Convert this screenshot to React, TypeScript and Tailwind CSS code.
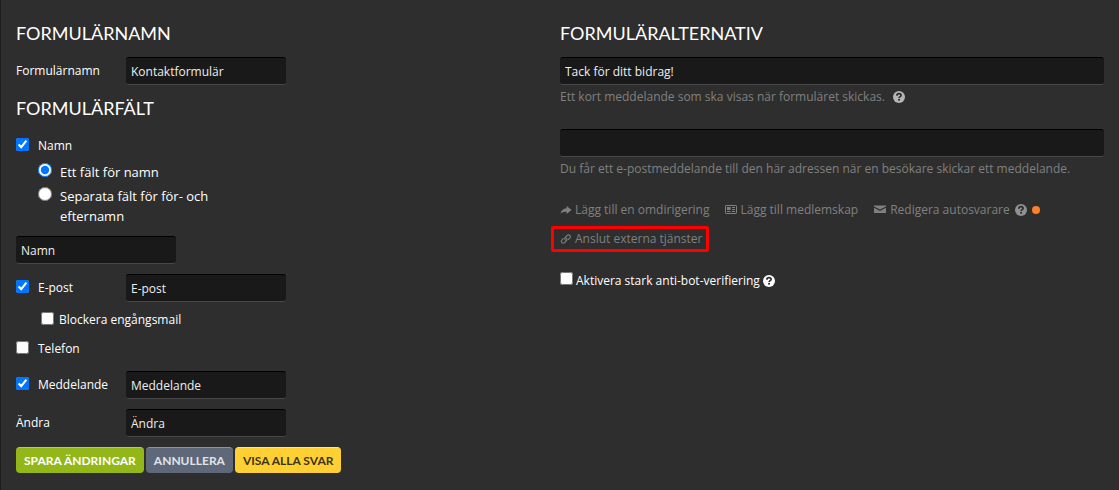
import React, { useState } from "react";

const inputClass =
  "block h-7 rounded-[3px] border-y border-t-black border-b-[#484848] bg-[#191919] px-[5px] pt-px text-[12px] text-[#eeeeee] outline-none";
const headingClass =
  "h-[22px] font-['Lato',sans-serif] text-[18px] leading-[22px] font-normal text-white uppercase";
const checkClass = "m-0 size-[13px] shrink-0 accent-[#0075ff]";
const radioClass = "m-0 mt-px size-[14px] shrink-0 accent-[#0075ff]";
const buttonClass =
  "h-[26px] rounded-[4px] border-t px-2 font-['Lato',sans-serif] text-[12px] leading-[25px] font-bold uppercase";

const HelpIcon = ({ className }: { className: string }) => (
  <svg viewBox="0 0 12 12" className={`size-3 shrink-0 ${className}`}>
    <circle cx="6" cy="6" r="6" fill="currentColor" />
    <path
      d="M3.9 4.7C3.9 3.4 4.8 2.7 6 2.7s2.1.7 2.1 1.7c0 1.3-2 1.2-2 2.7"
      fill="none"
      stroke="#2e2e2e"
      strokeWidth="1.7"
    />
    <rect x="5.1" y="7.9" width="1.9" height="1.7" fill="#2e2e2e" />
  </svg>
);

const ShareIcon = () => (
  <svg viewBox="0 0 12 12" className="size-3 shrink-0" fill="currentColor">
    <path d="M6.6 2 11.6 6l-5 4V7.7C4.1 7.6 2.1 8 .6 9.8 1 6.6 3.2 4.5 6.6 4.3z" />
  </svg>
);

const CardIcon = () => (
  <svg viewBox="0 0 12 12" className="size-3 shrink-0">
    <rect x=".5" y="1.5" width="11" height="8" rx=".6" fill="none" stroke="currentColor" />
    <path
      d="M2 3h3.6v3H2zM2 7h3.6v1H2zM7 3h3v1H7zM7 5h3v1H7zM7 7h3v1H7z"
      fill="currentColor"
    />
  </svg>
);

const MailIcon = () => (
  <svg viewBox="0 0 12 12" className="size-3 shrink-0" fill="currentColor">
    <path d="M0 1.5h12v1L6 5.6 0 2.5zM0 3.8l6 3.1 6-3.1V9H0z" />
  </svg>
);

const LinkIcon = () => (
  <svg
    viewBox="0 0 12 12"
    className="size-3 shrink-0"
    fill="none"
    stroke="currentColor"
    strokeWidth="1.1"
    strokeLinecap="round"
  >
    <path d="M5.2 6.9C4.4 6 4.6 5.1 5.2 4.5L7 2.6c.8-.8 2-.9 2.8-.2.8.8.7 2-.1 2.8L8.5 6.4" />
    <path d="M6.4 5.1c.8.8.7 1.8.1 2.4L4.7 9.4c-.8.8-2 .9-2.8.2-.8-.8-.7-2 .1-2.8l1.1-1.2" />
  </svg>
);

const App = () => {
  const [nameMode, setNameMode] = useState("single");

  return (
    <div className="min-h-screen border-l border-[#1c1c1c] bg-[#2e2e2e] px-[15px] font-['Open_Sans','Noto_Sans',sans-serif] text-[12px] leading-5 text-white">
      <form className="grid grid-cols-2" onSubmit={(e) => e.preventDefault()}>
        <section className="pt-[22px]">
          <h2 className={headingClass}>Formulärnamn</h2>
          <div className="mt-[13px] flex">
            <label htmlFor="formName" className="w-[110px] pt-1">
              Formulärnamn
            </label>
            <input id="formName" className={`${inputClass} w-40`} defaultValue="Kontaktformulär" />
          </div>

          <h2 className={`mt-3 ${headingClass}`}>Formulärfält</h2>
          <label className="mt-[17px] flex h-5 items-start gap-[9px]">
            <input type="checkbox" className={`mt-0.5 ${checkClass}`} defaultChecked />
            Namn
          </label>

          <div className="mt-[6px] ml-[22px] flex w-[190px] flex-col gap-1 text-[13px]">
            <label className="flex items-start gap-2">
              <input
                type="radio"
                name="nameMode"
                className={radioClass}
                checked={nameMode === "single"}
                onChange={() => setNameMode("single")}
              />
              Ett fält för namn
            </label>
            <label className="flex items-start gap-2">
              <input
                type="radio"
                name="nameMode"
                className={radioClass}
                checked={nameMode === "split"}
                onChange={() => setNameMode("split")}
              />
              Separata fält för för- och efternamn
            </label>
          </div>

          <input aria-label="Namn" className={`${inputClass} mt-[10px] w-40`} defaultValue="Namn" />

          <div className="mt-[10px] flex">
            <label className="flex w-[110px] items-start gap-[9px] pt-1">
              <input type="checkbox" className={`mt-0.5 ${checkClass}`} defaultChecked />
              E-post
            </label>
            <input aria-label="E-post" className={`${inputClass} w-40`} defaultValue="E-post" />
          </div>
          <label className="mt-2 ml-[25px] flex items-start gap-[5px]">
            <input type="checkbox" className={`mt-0.5 ${checkClass}`} />
            Blockera engångsmail
          </label>
          <label className="mt-[9px] flex items-start gap-[9px]">
            <input type="checkbox" className={`mt-0.5 ${checkClass}`} />
            Telefon
          </label>

          <div className="mt-3 flex">
            <label className="flex w-[110px] items-start gap-[9px] pt-1">
              <input type="checkbox" className={`mt-0.5 ${checkClass}`} defaultChecked />
              Meddelande
            </label>
            <input aria-label="Meddelande" className={`${inputClass} w-40`} defaultValue="Meddelande" />
          </div>
          <div className="mt-[10px] flex">
            <label htmlFor="submitText" className="w-[110px] pt-1">
              Ändra
            </label>
            <input id="submitText" className={`${inputClass} w-40`} defaultValue="Ändra" />
          </div>

          <div className="mt-[10px] flex gap-0.5">
            <button type="submit" className={`${buttonClass} border-[#b3cc5a] bg-[#93b719] text-white`}>
              Spara ändringar
            </button>
            <button type="button" className={`${buttonClass} border-[#8c93a1] bg-[#5f6879] text-[#e0e3e8]`}>
              Annullera
            </button>
            <button type="button" className={`${buttonClass} border-[#ffe38a] bg-[#ffd034] text-[#3d3413]`}>
              Visa alla svar
            </button>
          </div>
        </section>

        <section className="pt-[22px]">
          <h2 className={headingClass}>Formuläralternativ</h2>
          <input
            aria-label="Meddelande efter skickat formulär"
            className={`${inputClass} mt-[13px] w-full`}
            defaultValue="Tack för ditt bidrag!"
          />
          <p className="mt-0.5 flex items-center gap-2 text-[#808080]">
            Ett kort meddelande som ska visas när formuläret skickas.
            <HelpIcon className="text-[#b5b5b5]" />
          </p>

          <input
            type="email"
            aria-label="E-postadress"
            className={`${inputClass} mt-[22px] w-full`}
          />
          <p className="mt-0.5 text-[#808080]">
            Du får ett e-postmeddelande till den här adressen när en besökare skickar ett meddelande.
          </p>

          <div className="mt-[21px] flex flex-wrap gap-x-4 gap-y-[9px] text-[#808080]">
            <a href="#redirect" className="flex items-center gap-[3px]">
              <ShareIcon />
              Lägg till en omdirigering
            </a>
            <a href="#membership" className="flex items-center gap-[3px]">
              <CardIcon />
              Lägg till medlemskap
            </a>
            <div className="flex items-center gap-[5px]">
              <a href="#autoresponder" className="flex items-center gap-1">
                <MailIcon />
                Redigera autosvarare
              </a>
              <HelpIcon className="text-[#909090]" />
              <span className="size-2 rounded-full bg-[#ff7f2a]" />
            </div>
            <div className="w-full">
              <a href="#services" className="relative inline-flex items-center gap-[3px]">
                <LinkIcon />
                Anslut externa tjänster
                <span className="absolute -inset-y-[3px] -right-[6px] -left-[9px] rounded-[2px] border-3 border-[#ff0000]" />
              </a>
            </div>
          </div>

          <label className="mt-5 flex items-start gap-[3px]">
            <input type="checkbox" className={`mt-px ${checkClass}`} />
            Aktivera stark anti-bot-verifiering
            <HelpIcon className="mt-1 text-white" />
          </label>
        </section>
      </form>
    </div>
  );
};

export default App;
